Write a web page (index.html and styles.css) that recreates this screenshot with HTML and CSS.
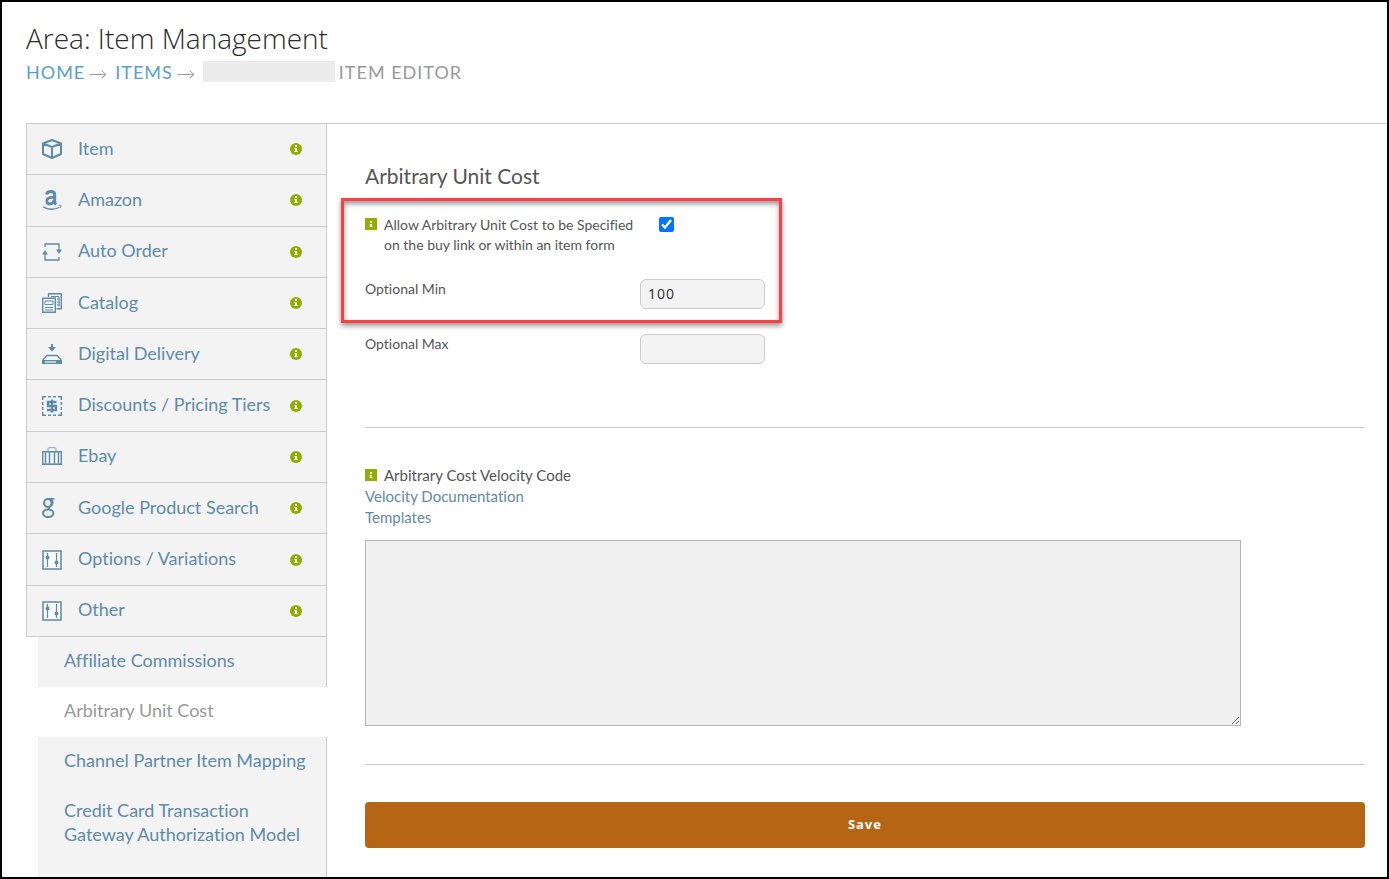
FILE: index.html
```html
<!DOCTYPE html>
<html lang="en">
<head>
    <meta charset="UTF-8">
    <meta name="viewport" content="width=device-width, initial-scale=1.0">
    <title>Item Management - Item Editor</title>
    <link rel="stylesheet" href="styles.css">
</head>
<body>
    <!-- shared info glyphs -->
    <svg class="sprite" aria-hidden="true">
        <symbol id="info-round" viewBox="0 0 12 12">
            <circle cx="6" cy="6" r="6" fill="#8fae00"/>
            <path d="M5 2h2v2H5zM5 5h2v4H5z" fill="#fff"/>
            <path d="M4 5h1v1H4zM4 8h4v1H4z" fill="#fff" opacity=".6"/>
        </symbol>
        <symbol id="info-square" viewBox="0 0 12 12">
            <path d="M0 0h12v12H0z" fill="#8fae00"/>
            <path d="M5 3h2v2H5zM5 6h2v3H5z" fill="#fff"/>
            <path d="M4 6h1v1H4zM4 8h4v1H4z" fill="#fff" opacity=".4"/>
        </symbol>
        <symbol id="sliders" viewBox="0 0 20 20">
            <path d="M1 1h18v18H1z" fill="#fff" fill-opacity=".5" stroke="#5e8ba8" stroke-width="1.500"/>
            <path d="M5.500 3v14M14.500 3v14" stroke="#5e8ba8" stroke-width="1.200"/>
            <circle cx="5.500" cy="7.500" r="2" fill="#5e8ba8"/>
            <circle cx="14.500" cy="12.500" r="2" fill="#5e8ba8"/>
        </symbol>
    </svg>

    <header class="page-header">
        <h1>Area: Item Management</h1>
        <nav class="breadcrumb" aria-label="Breadcrumb">
            <a href="#">HOME</a>
            <svg class="arrow" viewBox="0 0 17 9"><path d="M0 4.500h16M12 1l4 3.500L12 8"/></svg>
            <a href="#">ITEMS</a>
            <svg class="arrow" viewBox="0 0 17 9"><path d="M0 4.500h16M12 1l4 3.500L12 8"/></svg>
            <span class="item-id"></span>
            <span>ITEM EDITOR</span>
        </nav>
    </header>

    <div class="editor">
        <nav class="sidebar" aria-label="Item sections">
            <ul class="menu">
                <li><a href="#">
                    <svg class="icon" viewBox="0 0 20 20"><path d="M10 1l9 3.500v10.500L10 19l-9-4V4.500zM1 4.500L10 8l9-3.500M10 8v11" fill="none" stroke="#5e8ba8" stroke-width="2" stroke-linejoin="round"/></svg>
                    <span>Item</span><svg class="info"><use href="#info-round"/></svg></a></li>
                <li><a href="#">
                    <svg class="icon" viewBox="0 0 20 20"><g fill="none" stroke="#5e8ba8"><path d="M4.500 4.500C5 2.500 6.400 1.400 8.800 1.400c2.800 0 3.900 1.300 3.900 3.600v6.500c0 1.500.4 2.200 1.400 3" stroke-width="3"/><path d="M12 7.200c-4.500 0-7.200.9-7.200 3.900 0 1.700 1 2.900 2.900 2.900 2.200 0 3.800-1.600 4.300-3.600" stroke-width="2.800"/><path d="M1 16.700c5 3.300 12 3.300 16.500.5" stroke-width="1.300"/><path d="M16.500 15.500c1.500-.4 2.500-.3 2.500 0s-.1 1.600-.9 2.500"/></g></svg>
                    <span>Amazon</span><svg class="info"><use href="#info-round"/></svg></a></li>
                <li><a href="#">
                    <svg class="icon" viewBox="0 0 20 20"><path d="M3 5V2h14v6M17 15v3H3v-6" fill="none" stroke="#5e8ba8" stroke-width="1.300"/><path d="M14 7.500h6L17 12zM0 12.500h6L3 8z" fill="#5e8ba8"/></svg>
                    <span>Auto Order</span><svg class="info"><use href="#info-round"/></svg></a></li>
                <li><a href="#">
                    <svg class="icon" viewBox="0 0 20 20"><g fill="none" stroke="#5e8ba8"><path d="M6.500 4V.700h12.800v15H14.500" stroke-width="1.400"/><path d="M9 3.500h8v10M15 6h3M15 9h3M15 12h3"/><path d="M.7 5.200h12.600v14H.7z" stroke-width="1.400"/><path d="M3 8h8v3.500H3zM3 14.500h8M3 17h8"/></g></svg>
                    <span>Catalog</span><svg class="info"><use href="#info-round"/></svg></a></li>
                <li><a href="#">
                    <svg class="icon" viewBox="0 0 20 20"><path d="M9 0h2v3h3l-4 4.500L6 3h3zM0 16h20v4H0z" fill="#5e8ba8"/><path d="M.7 16L5 11.500h10l4.300 4.500" fill="none" stroke="#5e8ba8" stroke-width="1.300"/><path d="M3 18h11" stroke="#f3f3f3" stroke-width="1.300"/></svg>
                    <span>Digital Delivery</span><svg class="info"><use href="#info-round"/></svg></a></li>
                <li><a href="#">
                    <svg class="icon" viewBox="0 0 20 20"><g fill="none" stroke="#5e8ba8"><path d="M.7 4V.7H4M6 .7h3M11 .7h3M16 .7h3.300V4M19.300 6v3M19.300 11v3M19.300 16v3.300H16M14 19.300h-3M9 19.300H6M4 19.300H.7V16M.7 14v-3M.7 9V6" stroke-width="1.400"/><path d="M14.500 6H6v4h8v4H5M10 3.500v13" stroke-width="2.300"/></g></svg>
                    <span>Discounts / Pricing Tiers</span><svg class="info"><use href="#info-round"/></svg></a></li>
                <li><a href="#">
                    <svg class="icon" viewBox="0 0 20 20"><path d="M.7 4.700h18.600v12.600H.7zM3.500 5v12M7.500 5v12M12.500 5v12M16.500 5v12" fill="none" stroke="#5e8ba8" stroke-width="1.400"/><path d="M6 4V2q0-1.300 1.500-1.300h5Q14 .7 14 2v2" fill="none" stroke="#5e8ba8" stroke-opacity=".6" stroke-width="1.300"/></svg>
                    <span>Ebay</span><svg class="info"><use href="#info-round"/></svg></a></li>
                <li><a href="#">
                    <svg class="icon" viewBox="0 0 20 20"><g fill="none" stroke="#5e8ba8"><ellipse cx="5.800" cy="5" rx="3.800" ry="4" stroke-width="2.100"/><path d="M6 .9h6.500M9.500 1.500q2.500 3 0 6L7 9.500q-1 1 .5 2" stroke-width="1.700"/><ellipse cx="6.200" cy="15.300" rx="5.200" ry="3.800" stroke-width="2"/></g></svg>
                    <span>Google Product Search</span><svg class="info"><use href="#info-round"/></svg></a></li>
                <li><a href="#">
                    <svg class="icon"><use href="#sliders"/></svg>
                    <span>Options / Variations</span><svg class="info"><use href="#info-round"/></svg></a></li>
                <li><a href="#">
                    <svg class="icon"><use href="#sliders"/></svg>
                    <span>Other</span><svg class="info"><use href="#info-round"/></svg></a></li>
            </ul>
            <ul class="submenu">
                <li><a href="#">Affiliate Commissions</a></li>
                <li class="active"><a href="#" aria-current="page">Arbitrary Unit Cost</a></li>
                <li><a href="#">Channel Partner Item Mapping</a></li>
                <li><a href="#">Credit Card Transaction Gateway Authorization Model</a></li>
            </ul>
        </nav>

        <main class="content">
            <form>
                <h2>Arbitrary Unit Cost</h2>
                <div class="highlight">
                    <div class="row allow">
                        <label for="allow"><svg class="info"><use href="#info-square"/></svg><span>Allow Arbitrary Unit Cost to be Specified on the buy link or within an item form</span></label>
                        <input type="checkbox" id="allow" checked>
                    </div>
                    <div class="row">
                        <label for="min">Optional Min</label>
                        <input type="text" id="min" value="100">
                    </div>
                </div>
                <div class="row">
                    <label for="max">Optional Max</label>
                    <input type="text" id="max">
                </div>

                <div class="velocity">
                    <label for="code"><svg class="info"><use href="#info-square"/></svg>Arbitrary Cost Velocity Code</label>
                    <a href="#">Velocity Documentation</a>
                    <a href="#">Templates</a>
                    <textarea id="code"></textarea>
                </div>

                <div class="actions">
                    <button type="submit">Save</button>
                </div>
            </form>
        </main>
    </div>
</body>
</html>
```
FILE: styles.css
```css
* {
    box-sizing: border-box;
}
body {
    display: flex;
    flex-direction: column;
    min-height: 100vh;
    margin: 0;
    border: 2px solid #000;
    background: #fff;
    color: #555;
    font-family: Lato, "Liberation Sans", sans-serif;
    font-size: 14px;
    font-variant-ligatures: none;
}
a {
    color: #5e8ba8;
    text-decoration: none;
}
ul {
    list-style: none;
    margin: 0;
    padding: 0;
}
.sprite {
    position: absolute;
    width: 0;
    height: 0;
}

/* header */
.page-header {
    height: 121px;
    padding: 17px 24px 0;
}
h1 {
    margin: 0;
    color: #2c2c2c;
    font-family: "Open Sans", sans-serif;
    font-size: 28px;
    font-weight: 300;
    line-height: 38px;
}
.breadcrumb {
    display: flex;
    align-items: center;
    height: 30px;
    color: #999;
    font-size: 18px;
    letter-spacing: 1px;
}
.breadcrumb a {
    color: #589fce;
}
.arrow {
    width: 17px;
    height: 9px;
    margin: 4px 8px 0 5px;
    fill: none;
    stroke: #999;
}
.item-id {
    width: 132px;
    height: 21px;
    margin: 0 4px 2px 0;
    background: #ececec;
}

/* sidebar */
.editor {
    display: flex;
    flex: 1;
    margin-left: 24px;
    border-top: 1px solid #ccc;
}
.sidebar {
    display: flex;
    flex-direction: column;
    flex: 0 0 301px;
    font-size: 18px;
}
.menu {
    display: grid;
    grid-auto-rows: 1fr;
    height: 513px;
    border: 1px solid #ccc;
    border-width: 0 1px 0 1px;
    background: #f3f3f3;
}
.menu li {
    border-bottom: 1px solid #ccc;
}
.menu a {
    display: flex;
    align-items: center;
    height: 100%;
    padding: 0 24px 0 15px;
}
.menu span {
    flex: 1;
    padding-bottom: 3px;
}
.icon {
    width: 20px;
    height: 20px;
    margin-right: 16px;
}
.info {
    flex: none;
    width: 12px;
    height: 12px;
}
.submenu {
    display: flex;
    flex-direction: column;
    flex: 1;
    margin-left: 12px;
}
.submenu li {
    padding: 11px 16px 15px 26px;
    border-right: 1px solid #ccc;
    background: #f3f3f3;
    line-height: 24px;
}
.submenu li:last-child {
    flex: 1;
}
.submenu .active {
    border-color: #fff;
    background: #fff;
}
.submenu .active a {
    color: #999;
}

/* form */
.content {
    flex: 1;
    min-width: 0;
    padding: 38px 22px 29px 38px;
}
h2 {
    margin: 0 0 8px;
    font-size: 21px;
    font-weight: 400;
    line-height: 28px;
}
.highlight {
    width: 441px;
    height: 125px;
    margin: 0 0 11px -24px;
    padding: 14px 14px 0 21px;
    border: 3px solid #f94144;
    box-shadow: 0 3px 5px rgba(0, 0, 0, 0.4), inset 0 3px 5px rgba(0, 0, 0, 0.4);
}
.row {
    display: flex;
    align-items: flex-start;
}
.row label {
    flex: none;
    width: 275px;
    line-height: 20px;
}
.allow {
    margin-bottom: 24px;
}
.allow label {
    display: flex;
    gap: 7px;
}
.allow .info {
    margin-top: 3px;
}
input[type="checkbox"] {
    width: 15px;
    height: 15px;
    margin: 2px 0 0 19px;
    accent-color: #0075ff;
}
input[type="text"] {
    width: 125px;
    height: 30px;
    padding: 0 7px 2px;
    border: 1px solid #ccc;
    border-radius: 6px;
    background: #f3f3f3;
    color: #333;
    font: 14px "Noto Sans", sans-serif;
    letter-spacing: 1px;
}
.velocity {
    display: flex;
    flex-direction: column;
    align-items: flex-start;
    margin-top: 63px;
    padding: 37px 0 38px;
    border: 1px solid #ccc;
    border-width: 1px 0;
    font-size: 15px;
    line-height: 21px;
}
.velocity .info {
    margin-right: 7px;
}
textarea {
    width: 876px;
    max-width: 100%;
    height: 186px;
    margin-top: 12px;
    border: 1px solid #b5b5b5;
    background: #f0f0f0;
}
.actions {
    padding-top: 37px;
}
button {
    width: 100%;
    height: 46px;
    padding: 0 0 2px;
    border: 0;
    border-radius: 4px;
    background: #b56513;
    color: #fff;
    font: bold 13px "Noto Sans", sans-serif;
    letter-spacing: 1px;
    cursor: pointer;
}
```
